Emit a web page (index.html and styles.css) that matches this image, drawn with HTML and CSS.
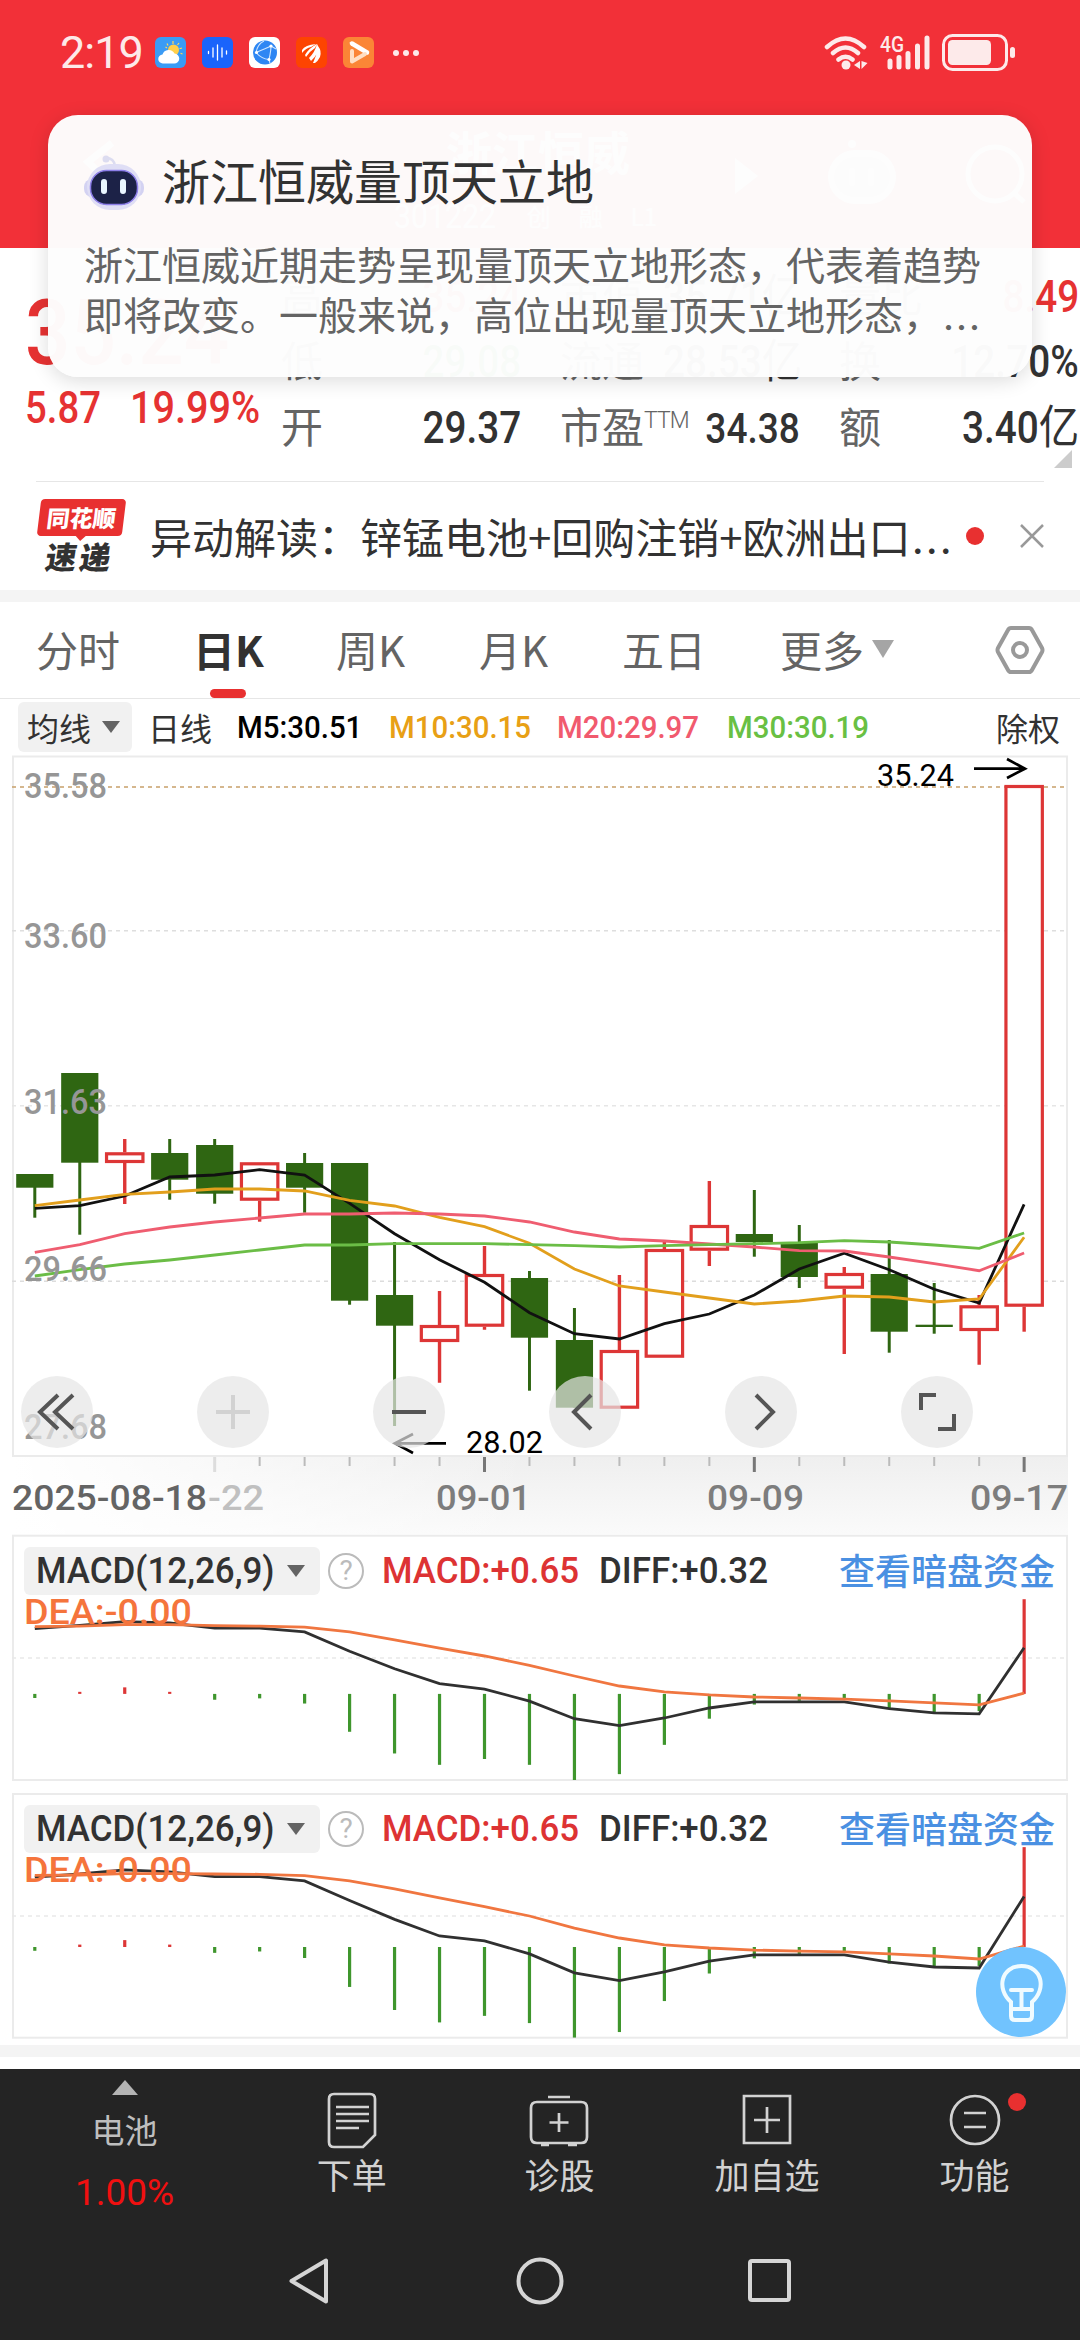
FILE: index.html
```html
<!DOCTYPE html>
<html lang="zh-CN">
<head>
<meta charset="utf-8">
<title>浙江恒威 301222</title>
<link rel="stylesheet" href="styles.css">
</head>
<body>
<div class="phone">
  <header class="top">
    <div class="status">
      <span class="time">2:19</span>
      <div class="apps">
        <svg viewBox="0 0 31 31"><rect width="31" height="31" rx="6" fill="#3a9bf5"/><g stroke="#ffd75a" stroke-width="1.2"><path d="M12 6.5l1 2M18 4v3M24 6l-1.500 2M27 11l-2.500.8M27.500 17l-2-.7M10.500 10l1.500 1"/></g><circle cx="18.500" cy="13" r="5.500" fill="#ffcf4a"/><path d="M8 26.500a4.500 4.500 0 0 1-.5-9 6.500 6.500 0 0 1 12-1 5 5 0 0 1-.5 10z" fill="#fff"/></svg>
        <svg viewBox="0 0 31 31"><rect width="31" height="31" rx="6" fill="#1a64fb"/><path d="M6.500 14.500v2M11 11v9M15.500 8v15M20 11v9M24.500 14v3" stroke="#fff" stroke-width="1.300" stroke-linecap="round"/></svg>
        <svg viewBox="0 0 31 31"><rect width="31" height="31" rx="6" fill="#fff"/><circle cx="16" cy="15.500" r="12" fill="#2e86f3"/><path d="M7 15.500C12 13 18 11 22 9M7 15.500C10 19 14 22 20 22.500M22 9c0 5-1 9-2 13.500M7 15.500C8 10 11 6 15 4M20 22.500l1 4M22 9l5 3" stroke="#cfe6ff" stroke-width="1.100" fill="none"/><circle cx="7.500" cy="15.500" r="1.600" fill="#fff"/><circle cx="22" cy="9" r="1.600" fill="#fff"/><circle cx="20" cy="22.500" r="1.600" fill="#fff"/></svg>
        <svg viewBox="0 0 31 31"><rect width="31" height="31" rx="6" fill="#fd4401"/><path d="M6 13q3-5 14-6l-5 3q-5 1-9 6zM9 18q4-7 12-11l-2 4q-5 3-9 9zM13 21q6-6 8-14l1 2q1 8-7 15zM17 26q4-8 5-17 4 5 2 11-2 4-5 6z" fill="#fff"/></svg>
        <svg viewBox="0 0 31 31"><rect width="31" height="31" rx="6" fill="#fb8536"/><path d="M9 6.500L24 15.500" stroke="#fff" stroke-width="4.500" stroke-linecap="round"/><path d="M9 14v10.500L22 17" stroke="#ffdfc4" stroke-width="4" stroke-linecap="round" stroke-linejoin="round" fill="none"/></svg>
      </div>
      <span class="more-dots"><i></i><i></i><i></i></span>
      <svg class="signals" viewBox="822 30 196 44">
        <g fill="none" stroke="#fdeaea" stroke-width="4.500" stroke-linecap="round"><path d="M827 46q18.500-17 37 0M833 52q12.500-11 25 0M838.500 58.500q7-5.500 14 0"/></g>
        <circle cx="846" cy="64" r="4.500" fill="#fdeaea"/><path d="M860 60v8l-6-4zM861.500 60v8l6-6z" fill="#fdeaea"/>
        <text x="880" y="51" class="net" textLength="24" lengthAdjust="spacingAndGlyphs">4G</text>
        <path d="M890 60v6M899 56.500v9.500M908 52.500v13.500M917.500 45v21M927 37v29" stroke="#fdeaea" stroke-width="5" stroke-linecap="round"/>
        <rect x="943.500" y="34.500" width="63" height="34" rx="9" fill="none" stroke="#fdeaea" stroke-width="3"/><rect x="948" y="39" width="43" height="25" rx="4.500" fill="#fdeaea"/><rect x="1010" y="46" width="5" height="11" rx="2.500" fill="#fdeaea"/>
      </svg>
    </div>
    <div class="titlebar">
      <svg class="back" viewBox="0 0 40 46"><path d="M34 4L10 23l20 19" fill="none" stroke="#fff" stroke-width="7"/></svg>
      <div class="stock">
        <div class="name">浙江恒威</div>
        <div class="meta"><span class="n">301222</span><b>创</b><b>融</b><b>L1</b></div>
      </div>
      <svg class="acts" viewBox="730 130 300 80"><path d="M735 158v36l23-18z" fill="#fff"/><rect x="828" y="150" width="68" height="54" rx="27" fill="#fff"/><circle cx="852" cy="144" r="4" fill="#fff"/><rect x="834" y="157" width="56" height="40" rx="20" fill="#cbb"/><path d="M852 171v12M871 171v12" stroke="#fff" stroke-width="6" stroke-linecap="round"/><circle cx="995" cy="174" r="27" fill="none" stroke="#fff" stroke-width="5"/><path d="M1014 193l10 9" stroke="#fff" stroke-width="5"/></svg>
    </div>
  </header>

  <section class="quote">
    <div class="price">
      <div class="now"><span class="n">35.24</span></div>
      <div class="chg"><span class="n">5.87</span><span class="n">19.99%</span></div>
    </div>
    <div class="stats">
      <div><label>高</label><span class="n red">35.24</span></div>
      <div><label>市值</label><span class="n">35.71<em>亿</em></span></div>
      <div><label>量比</label><span class="n red">8.49</span></div>
      <div><label>低</label><span class="n green">29.08</span></div>
      <div><label>流通</label><span class="n">28.53<em>亿</em></span></div>
      <div><label>换</label><span class="n">12.70%</span></div>
      <div><label>开</label><span class="n">29.37</span></div>
      <div><label>市盈<sup>TTM</sup></label><span class="n sm">34.38</span></div>
      <div><label>额</label><span class="n">3.40<em>亿</em></span></div>
    </div>
    <i class="corner"></i>
  </section>

  <section class="news">
    <div class="logo"><div class="badge"><span>同花顺</span></div><div class="sub">速递</div></div>
    <div class="headline">异动解读：锌锰电池+回购注销+欧洲出口<span class="ell">…</span></div>
    <i class="dot"></i>
    <svg class="close" viewBox="0 0 24 24"><path d="M1 1l22 22M23 1L1 23" stroke="#999" stroke-width="2.500"/></svg>
  </section>

  <nav class="tabs">
    <span>分时</span><span class="on">日K</span><span>周K</span><span>月K</span><span>五日</span><span class="more">更多<i></i></span>
    <svg class="gear" viewBox="0 0 50 50"><path d="M16 3h18q2 0 3 2l10 18q1 2 0 4L37 45q-1 2-3 2H16q-2 0-3-2L3 27q-1-2 0-4L13 5q1-2 3-2z" fill="none" stroke="#999" stroke-width="4"/><circle cx="25" cy="25" r="7" fill="none" stroke="#999" stroke-width="4"/></svg>
  </nav>

  <div class="mabar">
    <span class="chip">均线<i></i></span><span class="day">日线</span>
    <span class="n m5">M5:30.51</span><span class="n m10">M10:30.15</span><span class="n m20">M20:29.97</span><span class="n m30">M30:30.19</span>
    <span class="exr">除权</span>
  </div>

  <section class="kchart">
    <svg id="kline" viewBox="0 755 1080 779"></svg>
    <div class="tools">
      <b><svg viewBox="-36 -36 72 72"><path d="M1-17L-17 0 1 17M16-17L-2 0 16 17"/></svg></b>
      <b class="off"><svg viewBox="-36 -36 72 72"><path d="M-17 0H17M0-17V17"/></svg></b>
      <b><svg viewBox="-36 -36 72 72"><path d="M-17 0H17"/></svg></b>
      <b><svg viewBox="-36 -36 72 72"><path d="M6-17L-11 0 6 17"/></svg></b>
      <b><svg viewBox="-36 -36 72 72"><path d="M-5-17L12 0-5 17"/></svg></b>
      <b><svg viewBox="-36 -36 72 72"><path d="M-16-2V-17H-1M1 17H17V2"/></svg></b>
    </div>
  </section>

  <section class="ind">
    <svg id="macd1" viewBox="0 1534 1080 249"></svg>
    <div class="indhead"><span class="chip"><span class="n">MACD(12,26,9)</span><i></i></span><span class="q">?</span><span class="n mv">MACD:+0.65</span><span class="n dv">DIFF:+0.32</span><a>查看暗盘资金</a></div>
  </section>
  <section class="ind second">
    <svg id="macd2" viewBox="0 1792 1080 249"></svg>
    <div class="indhead"><span class="chip"><span class="n">MACD(12,26,9)</span><i></i></span><span class="q">?</span><span class="n mv">MACD:+0.65</span><span class="n dv">DIFF:+0.32</span><a>查看暗盘资金</a></div>
    <div class="bulb"><svg viewBox="0 0 90 90"><path d="M35 55C20 42 25 19 45.500 19S71 42 56 55V69q0 4-4 4H39q-4 0-4-4zM35 62h21M35 43h21M45.500 43V62" fill="none" stroke="#f0fbff" stroke-width="4" stroke-linecap="round"/></svg></div>
  </section>
  <div class="band"></div>

  <footer class="dock">
    <div class="items">
      <div class="idx"><i class="up"></i><span>电池</span><span class="pct">1.00%</span></div>
      <div class="item"><svg viewBox="-27 -30 54 60"><path d="M-18-26H18q5 0 5 5V15L11 27H-18q-5 0-5-5V-21q0-5 5-5z"/><path d="M-16-13H17M-16-6H17M-16 1H17M-16 8H7"/></svg><span>下单</span></div>
      <div class="item"><svg viewBox="-30 -30 60 60"><path d="M-22-18H22q6 0 6 6V17q0 6-6 6H-22q-6 0-6-6V-12q0-6 6-6z"/><path d="M-11-23H11M0-7V12M-9.500 2.500H9.500M-18 25h8M9 25h9"/></svg><span>诊股</span></div>
      <div class="item"><svg viewBox="-30 -30 60 60"><path d="M-23-24H23V23H-23zM0-13V13M-13 0H13"/></svg><span>加自选</span></div>
      <div class="item"><svg viewBox="-30 -30 60 60"><circle r="24"/><path d="M-11-7H11M-11 7H11"/></svg><span>功能</span><i class="dot"></i></div>
    </div>
    <div class="sysnav">
      <svg viewBox="0 0 46 50"><path d="M39 4.500V45.500L4.500 25z"/></svg>
      <svg viewBox="0 0 50 50"><circle cx="25" cy="25" r="21.500"/></svg>
      <svg viewBox="0 0 50 50"><rect x="5" y="5" width="39" height="39" rx="2"/></svg>
    </div>
  </footer>

  <aside class="popup">
    <div class="ptitle">
      <svg viewBox="0 0 60 58"><circle cx="22" cy="6" r="3.500" fill="#dcdcf0"/><path d="M22 5q8 0 9 8" stroke="#dcdcf0" stroke-width="2.500" fill="none"/><rect x="0" y="26" width="60" height="18" rx="8" fill="#d3d2f2"/><rect x="3" y="11" width="54" height="46" rx="23" fill="#dfdef5"/><rect x="6.500" y="17.500" width="47" height="34" rx="16" fill="#1c2247" stroke="#8d7fe8" stroke-width="1.500"/><path d="M20 29v9M39 29v9" stroke="#e9f6ff" stroke-width="6" stroke-linecap="round"/></svg>
      <span>浙江恒威量顶天立地</span>
    </div>
    <p>浙江恒威近期走势呈现量顶天立地形态，代表着趋势<br>即将改变。一般来说，高位出现量顶天立地形态，<span class="ell">…</span></p>
  </aside>
</div>
<script src="chart.js"></script>
</body>
</html>
```
FILE: styles.css
```css
* { box-sizing: border-box; }
body { margin: 0; background: #fff; }
i, em { font-style: normal; }
.phone { position: relative; width: 1080px; height: 2340px; overflow: hidden; background: #fff; color: #323232; font-family: "Noto Sans CJK SC", sans-serif; display: flex; flex-direction: column; }
.n { font-family: Roboto, "Noto Sans CJK SC", sans-serif; display: inline-block; transform: scaleX(.89); transform-origin: 0 50%; white-space: nowrap; }
.ell { display: inline-block; line-height: 0; vertical-align: -.31em; }
.red { color: #e63232; }
.green { color: #14821e; }

.top { height: 248px; background: #f23038; flex: none; }
.status { height: 105px; padding: 0 62px 0 60px; display: flex; align-items: center; }
.time { font: 400 45px/45px Roboto, sans-serif; color: #fde9e9; width: 95px; letter-spacing: -1px; }
.apps { display: flex; gap: 16px; }
.apps svg { width: 31px; height: 31px; }
.more-dots { display: flex; gap: 4px; margin-left: 19px; flex: 1; }
.more-dots i { width: 6px; height: 6px; border-radius: 3px; background: #fde9e9; }
.signals { width: 196px; height: 44px; }
.net { font: 500 22px Roboto, sans-serif; fill: #fdeaea; }
.titlebar { display: flex; justify-content: space-between; padding: 20px 50px 0 78px; color: #fff; }
.back { width: 40px; height: 46px; margin-top: 14px; }
.stock { width: 290px; margin-left: 230px; }
.name { font-size: 46px; line-height: 50px; font-weight: 700; margin-left: 52px; }
.meta { display: flex; gap: 8px; line-height: 34px; font-size: 34px; margin-top: 24px; align-items: center; }
.meta b { font-size: 24px; font-weight: 400; line-height: 32px; padding: 0 10px; background: rgba(255,255,255,.15); }
.acts { width: 300px; height: 80px; margin-top: 5px; flex: none; }

.quote { height: 234px; position: relative; display: flex; flex: none; }
.quote::after { content: ""; position: absolute; left: 36px; right: 36px; bottom: 0; height: 1px; background: #e6e6e6; }
.price { width: 281px; padding: 41px 0 0 25px; color: #e63232; }
.now { display: flex; font-size: 90px; line-height: 90px; font-weight: 500; }
.chg { display: flex; margin-top: 7px; font-size: 44px; line-height: 44px; font-weight: 500; }
.chg .n:first-child { width: 105px; transform: scaleX(.87); }
.chg .n { transform: scaleX(.9); }
.stats { width: 798px; height: 197px; margin-top: 16px; display: grid; grid-template-columns: repeat(3, 240px); column-gap: 39px; grid-auto-rows: 65.5px; }
.stats > div { display: flex; justify-content: space-between; align-items: center; height: 65px; font-size: 44px; line-height: 60px; font-weight: 500; }
.stats label { font-size: 42px; font-weight: 400; color: #646464; white-space: nowrap; margin-top: -6px; }
.stats sup { font: 300 23px/23px Roboto, sans-serif; vertical-align: 15px; letter-spacing: -1px; }
.stats .n { transform-origin: 100% 50%; transform: scaleX(.88); }
.stats .sm { font-size: 43px; transform: scaleX(.86); }
.stats em { font-size: 46px; line-height: 0; font-weight: 400; }
.corner { position: absolute; right: 8px; top: 202px; border-left: 18px solid transparent; border-bottom: 18px solid #ccc; }

.news { height: 108px; flex: none; display: flex; align-items: center; padding: 0 36px 0 37px; }
.logo { width: 88px; height: 74px; margin-right: 25px; }
.badge { width: 85px; height: 37px; background: #e83030; border-radius: 4px; transform: skewX(-7deg); text-align: center; color: #fff; font-weight: 900; font-size: 23px; line-height: 36px; position: relative; margin-left: 2px; }
.badge::after { content: ""; position: absolute; left: 38px; top: 36px; border: 6px solid transparent; border-top-color: #e83030; border-bottom: 0; }
.sub { font-size: 31px; line-height: 30px; margin: 5px 0 0 9px; font-weight: 900; transform: skewX(-9deg); letter-spacing: 3px; color: #323232; white-space: nowrap; }
.headline { font-size: 42px; line-height: 60px; width: 807px; white-space: nowrap; }
.news .dot { width: 18px; height: 18px; border-radius: 9px; background: #e83030; margin-left: 9px; }
.close { width: 24px; height: 24px; margin-left: auto; }

.tabs { height: 109px; border-top: 12px solid #f4f4f4; border-bottom: 1px solid #e6e6e6; flex: none; display: flex; align-items: center; padding: 0 35px 0 36px; font-size: 42px; line-height: 60px; color: #646464; }
.tabs span { width: 143px; white-space: nowrap; position: relative; margin-top: -3px; }
.tabs span:first-child { width: 157px; }
.tabs .on { color: #323232; font-weight: 700; }
.tabs .on::after { content: ""; position: absolute; left: 17px; top: 70px; width: 36px; height: 9px; border-radius: 5px; background: #e83030; }
.tabs span:nth-child(5) { width: 158px; }
.tabs .more { width: 120px; display: flex; align-items: center; gap: 8px; }
.more i { border: 11px solid transparent; border-top: 18px solid #a5a5a5; border-bottom: 0; }
.gear { width: 50px; height: 50px; margin-left: auto; }

.mabar { height: 56px; flex: none; display: flex; align-items: center; padding: 0 20px 0 18px; font-size: 32px; line-height: 48px; }
.chip { background: #f1f1f1; border-radius: 6px; display: flex; align-items: center; justify-content: space-between; }
.chip i { border: 9px solid transparent; border-top: 12px solid #646464; border-bottom: 0; }
.mabar .chip { width: 114px; height: 50px; padding: 0 12px 0 9px; }
.day { margin-left: 16px; width: 89px; }
.mabar .n { transform: scaleX(.92); width: 152px; color: #000; font-weight: 500; }
.mabar .m10 { width: 168px; color: #e8a015; }
.mabar .m20 { width: 170px; color: #f15a6e; }
.mabar .m30 { color: #69c043; }
.exr { margin-left: auto; }

.kchart { height: 779px; flex: none; position: relative; }
.kchart svg, .ind > svg { display: block; width: 100%; height: 100%; }
.tools { position: absolute; left: 21px; right: 107px; top: 621px; display: flex; justify-content: space-between; }
.tools b { width: 72px; height: 72px; border-radius: 36px; background: rgba(229,229,229,.7); }
.tools path { fill: none; stroke: #555; stroke-width: 4; }
.tools .off path { stroke: #d2d2d2; }

.ind { height: 249px; flex: none; position: relative; }
.second { margin: 9px 0 4px; }
.indhead { position: absolute; left: 24px; right: 25px; top: 13px; height: 48px; display: flex; align-items: center; font-size: 36px; line-height: 48px; }
.indhead .chip { width: 296px; height: 48px; padding: 0 15px 0 12px; }
.indhead .chip .n { width: 250px; margin-right: -20px; }
.indhead .n { transform: scaleX(.97); font-weight: 500; }
.q { width: 36px; height: 36px; border: 2.500px solid #bbb; border-radius: 50%; margin: 0 18px 0 8px; color: #bbb; font: 28px/32px Roboto, sans-serif; text-align: center; }
.mv { color: #dd3333; width: 217px; }
.indhead a { margin: -4px 0 0 auto; color: #4a90e2; font-weight: 500; }
.bulb { position: absolute; left: 976px; top: 155px; width: 90px; height: 90px; border-radius: 45px; background: #71c3fe; }
.band { height: 12px; background: #f4f4f4; flex: none; margin-bottom: 12px; }

.dock { height: 271px; background: #242424; flex: none; color: #d2d2d2; }
.items { height: 165px; display: flex; padding-left: 37px; font-size: 35px; line-height: 44px; }
.idx { width: 175px; display: flex; flex-direction: column; align-items: center; color: #bebebe; padding-top: 11px; font-size: 33px; }
.idx .up { border: 13px solid transparent; border-bottom: 15px solid #b4b4b4; border-top: 0; margin-bottom: 12px; }
.pct { font: 37px/44px Roboto, sans-serif; color: #f01010; margin-top: 20px; }
.item { width: 207.600px; display: flex; flex-direction: column; align-items: center; padding-top: 21px; position: relative; }
.item:nth-child(2) { margin-left: 36px; }
.item svg { height: 60px; width: 60px; fill: none; stroke: #d2d2d2; stroke-width: 2.700; margin-bottom: 2px; }
.item .dot { position: absolute; left: 137px; top: 24px; width: 18px; height: 18px; border-radius: 9px; background: #e83030; }
.sysnav { display: flex; justify-content: center; gap: 180px; padding-top: 22px; }
.sysnav svg { width: 50px; height: 50px; fill: none; stroke: #d5d5d5; stroke-width: 4; stroke-linejoin: round; }

.popup { position: absolute; left: 48px; top: 115px; width: 984px; height: 262px; border-radius: 30px; background: rgba(253,253,253,.98); box-shadow: 0 4px 20px rgba(0,0,0,.14); padding: 35px 36px; }
.ptitle { display: flex; align-items: center; gap: 19px; font-size: 48px; line-height: 60px; height: 64px; }
.ptitle span { margin: -6px 0 0 -1px; }
.ptitle svg { width: 60px; height: 58px; }
.popup p { margin: 24px 0 0; font-size: 39px; line-height: 50px; color: #646464; white-space: nowrap; }

.axis { font: 500 35px Roboto, sans-serif; }
.ann { font: 31px Roboto, sans-serif; }
```
FILE: chart.js
```js
const NS = "http://www.w3.org/2000/svg";
const X0 = 34.8, STEP = 44.97;
const x = i => X0 + STEP * i;

function add(svg, tag, attrs, text) {
  const el = document.createElementNS(NS, tag);
  for (const k in attrs) el.setAttribute(k, attrs[k]);
  if (text) el.textContent = text;
  svg.appendChild(el);
}
function line(svg, ys, stroke, w) {
  add(svg, "polyline", { points: ys.map((y, i) => x(i).toFixed(1) + "," + y.toFixed(1)).join(" "), fill: "none", stroke, "stroke-width": w });
}
function grid(svg, y, color) {
  add(svg, "path", { d: `M12 ${y}H1066`, stroke: color, "stroke-width": 1.5, "stroke-dasharray": "4 4" });
}
function label(svg, s, left, y, w, fill, cls) {
  add(svg, "text", { x: left, y, fill, class: cls, textLength: w, lengthAdjust: "spacingAndGlyphs" }, s);
}

// Daily candles: direction, body top, body bottom, high, low
const candles = [
  ["d", 1174, 1187.7, 1174, 1217.7], ["d", 1073, 1162.7, 1073, 1234.7], ["u", 1152.3, 1163, 1139, 1204],
  ["d", 1153, 1179.7, 1139, 1199.7], ["d", 1145, 1193.7, 1139, 1203.7], ["u", 1162.3, 1200.7, 1162.3, 1221.7],
  ["d", 1163, 1187.7, 1153, 1212.7], ["d", 1163, 1300.7, 1163, 1304.7], ["d", 1295, 1325.7, 1242, 1426],
  ["u", 1325, 1342, 1291, 1382.7], ["u", 1274, 1326.7, 1246, 1329.7], ["d", 1278, 1337.7, 1271, 1390.7],
  ["d", 1340, 1407.7, 1308, 1407.7], ["u", 1350, 1408.7, 1275, 1408.7], ["u", 1249, 1357.7, 1242, 1357.7],
  ["u", 1225, 1250.7, 1181, 1266], ["d", 1234, 1242, 1190, 1256.7], ["d", 1243, 1277, 1225, 1288],
  ["u", 1273, 1288.7, 1267, 1354], ["d", 1274, 1331.7, 1240, 1352.7], ["d", 1324.7, 1327, 1283, 1333.7],
  ["u", 1305.3, 1331, 1295, 1364.7], ["u", 785, 1306.7, 785, 1331.7]
];

const k = document.getElementById("kline");
add(k, "linearGradient", { id: "fade", x1: 0, x2: 0, y1: 0, y2: 1 });
const grad = k.querySelector("#fade");
add(grad, "stop", { offset: 0, "stop-color": "#efefef" });
add(grad, "stop", { offset: 1, "stop-color": "#fafafa" });
add(k, "linearGradient", { id: "fadex" });
const gx = k.querySelector("#fadex");
add(gx, "stop", { offset: 0, "stop-color": "#fff" });
add(gx, "stop", { offset: 1, "stop-color": "#fff", "stop-opacity": 0 });
add(k, "rect", { x: 13, y: 1457, width: 1055, height: 77, fill: "url(#fade)" });
add(k, "rect", { x: 13, y: 1457, width: 520, height: 77, fill: "url(#fadex)" });
add(k, "rect", { x: 13, y: 756.5, width: 1054, height: 699.5, fill: "#fff", stroke: "#ebebeb", "stroke-width": 2 });
grid(k, 787, "#c8a06a");
grid(k, 930.7, "#dedede");
grid(k, 1105.8, "#e6e6e6");
grid(k, 1281.3, "#dcdcdc");

candles.forEach(([dir, top, bot, hi, lo], i) => {
  const cx = x(i);
  if (dir === "d") {
    add(k, "path", { d: `M${cx} ${hi}V${lo}`, stroke: "#2f6612", "stroke-width": 3 });
    add(k, "rect", { x: cx - 18.6, y: top, width: 37.2, height: bot - top, fill: "#2f6612" });
  } else {
    add(k, "path", { d: `M${cx} ${hi}V${top}M${cx} ${bot}V${lo}`, stroke: "#dd3636", "stroke-width": 3.4 });
    add(k, "rect", { x: cx - 18.2, y: top + 1.5, width: 36.4, height: bot - top - 3, fill: "#fff", stroke: "#dd3636", "stroke-width": 3.2 });
  }
});
const ma = vs => vs.map(v => 1040 + v / 3);
line(k, ma([505,497,468,411,405,389,405,490,581,659,727,818,881,897,851,822,765,687,640,689,748,789,493]), "#111", 2.8);
line(k, ma([497,480,463,456,447,447,453,481,498,532,560,610,687,738,756,774,792,783,768,771,786,777,592]), "#e29f1c", 2.8);
line(k, ma([637,614,581,561,546,534,522,522,519,522,528,546,576,597,603,612,621,632,633,651,671,692,639]), "#ef5d70", 2.8);
line(k, ma([708,689,672,660,645,630,615,615,611,611,611,614,617,621,617,614,611,608,602,606,615,625,579]), "#6bbd46", 2.8);

[["35.58", 798.3], ["33.60", 948], ["31.63", 1114], ["29.66", 1281], ["27.68", 1438.7]].forEach(([s, y]) => label(k, s, 24, y, 83, "#969696", "axis"));
label(k, "35.24", 877, 786, 77, "#000", "ann");
label(k, "28.02", 466, 1452.5, 77, "#000", "ann");
add(k, "path", { d: "M974 768.700H1025M1007 759L1025 768.700 1007 778M446 1443.300H395M413 1434L395 1443.300 413 1453", fill: "none", stroke: "#000", "stroke-width": 2.7 });
for (let i = 4; i < 23; i++) {
  const major = [4, 10, 16, 22].includes(i);
  add(k, "path", { d: `M${x(i)} 1457v${major ? 15 : 9}`, stroke: i === 4 ? "#ddd" : major ? "#777" : "#bbb", "stroke-width": major ? 3 : 2 });
}
label(k, "2025-08-18", 12, 1510, 195, "#646464", "axis");
label(k, "-22", 208, 1510, 56, "#c0c0c0", "axis");
label(k, "09-01", 436, 1510, 95, "#7d7d7d", "axis");
label(k, "09-09", 707, 1510, 97, "#7d7d7d", "axis");
label(k, "09-17", 970, 1510, 98, "#7d7d7d", "axis");

function macd(id, top, bottom, gridY, zero, ends, diff, dea, textY) {
  const s = document.getElementById(id);
  const py = v => 1520 + v / 2.904;
  add(s, "rect", { x: 13, y: top, width: 1054, height: bottom - top, fill: "#fff", stroke: "#ebebeb", "stroke-width": 2 });
  grid(s, gridY, "#e9e9e9");
  ends.forEach((e, i) => add(s, "path", { d: `M${x(i)} ${py(zero)}V${py(e)}`, stroke: e < zero ? "#dd3636" : "#3f962d", "stroke-width": 3.2 }));
  line(s, diff.map(py), "#303030", 2.8);
  line(s, dea.map(py), "#f07640", 2.8);
  label(s, "DEA:-0.00", 24, textY, 168, "#f5743c", "axis");
}
macd("macd1", 1535.7, 1780, 1658, 505,
  [517,499,486,499,522,518,533,615,678,711,694,711,755,738,653,577,536,525,518,548,558,555,230],
  [315,306,295,299,314,314,325,381,432,475,491,526,577,597,575,546,528,528,528,548,560,563,371],
  [310,308,304,304,307,308,311,325,348,372,395,422,453,482,499,508,514,517,520,525,531,537,503], 1623.5);
macd("macd2", 1794, 2037.7, 1916, 1240,
  [1251,1233,1220,1233,1257,1253,1272,1356,1423,1459,1440,1461,1503,1487,1397,1317,1273,1260,1253,1288,1300,1295,950],
  [1037,1028,1016,1022,1036,1036,1048,1105,1160,1208,1222,1260,1315,1338,1312,1281,1263,1263,1263,1284,1298,1301,1093],
  [1032,1031,1027,1027,1028,1029,1033,1048,1071,1097,1123,1150,1185,1214,1234,1243,1249,1252,1254,1260,1266,1275,1237], 1881.8);
```
